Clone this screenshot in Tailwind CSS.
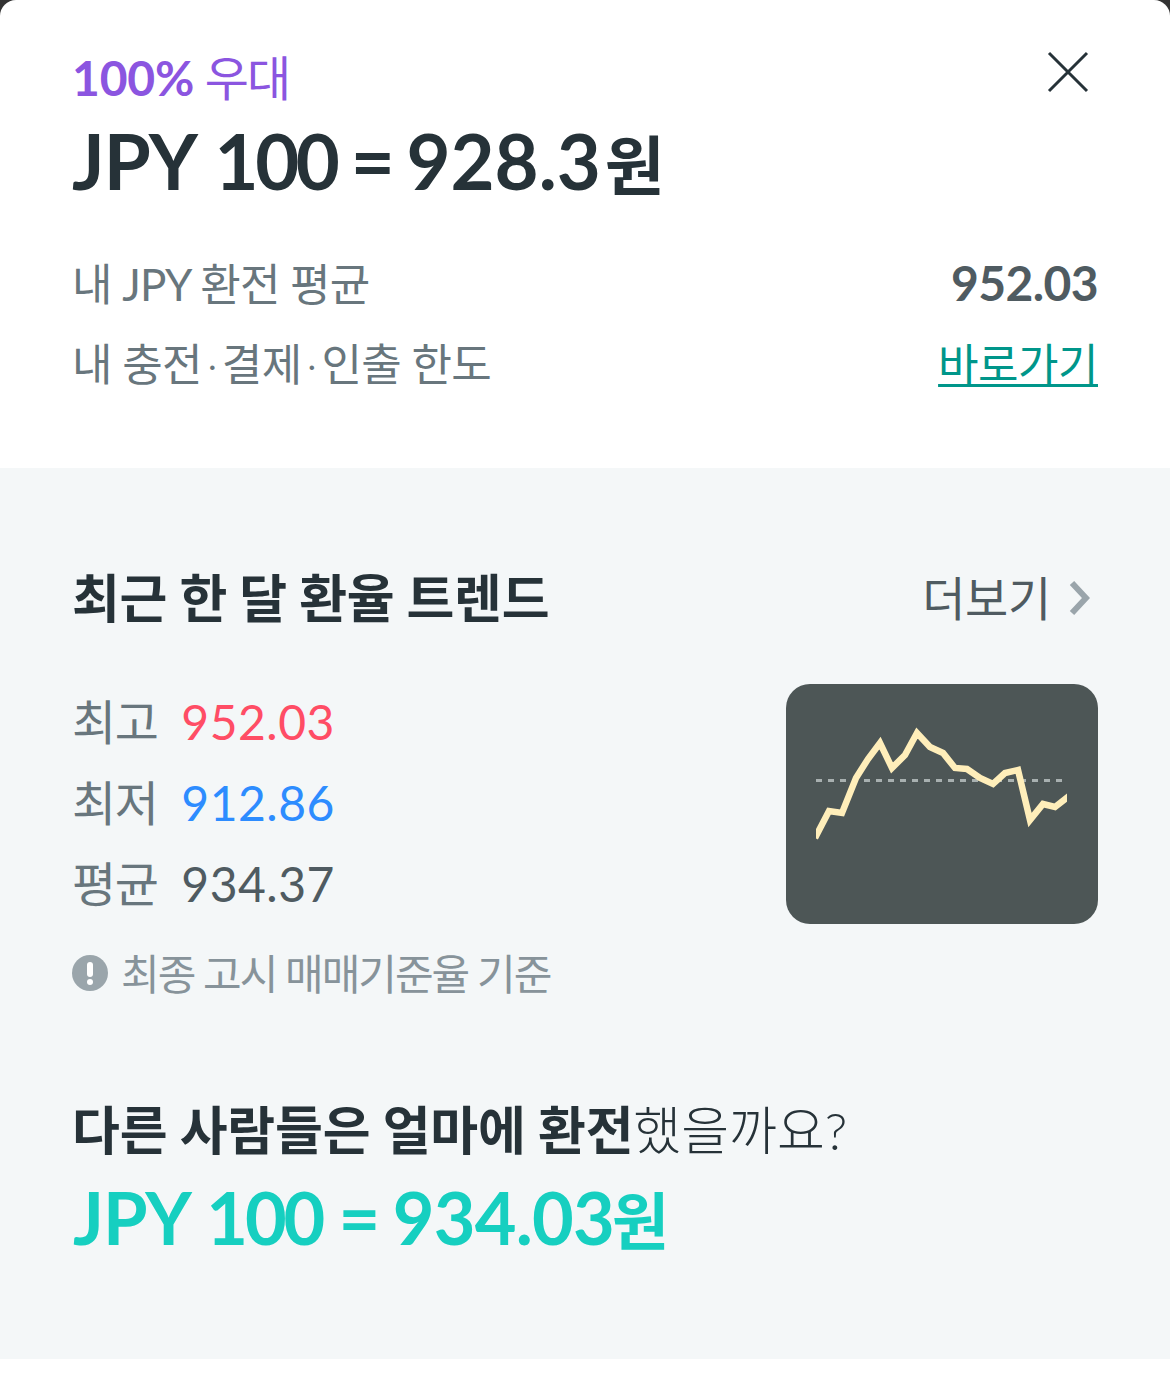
<!doctype html>
<html lang="ko"><head><meta charset="utf-8">
<script src="https://cdn.jsdelivr.net/npm/@tailwindcss/browser@4"></script>
</head>
<body class="m-0 w-[1170px] h-[1377px] bg-white overflow-hidden font-['Lato','Noto_Sans_CJK_KR',sans-serif]">
<div class="bg-[#333]">
<div class="h-[468px] px-[72px] pt-[44px] relative rounded-t-[16px] bg-white">
  <div class="text-[48px] leading-[68px] tracking-[-1.5px] text-[#8b55e0] h-[68px]"><span class="font-bold tracking-[-0.2px]">100%</span> <span class="font-normal text-[48px] tracking-[-2px]">우대</span></div>
  <div class="text-[76px] leading-[98px] font-bold text-[#263238] h-[100px]"><span class="tracking-[-0.8px]">JPY</span> <span class="tracking-[-3.5px] -ml-[1px]">100</span> <span class="-ml-[4px]">=</span> <span class="tracking-[0px] -ml-[7px]">928.3</span><span class="text-[65px] ml-[4px]">원</span></div>
  <div class="mt-[32px] flex justify-between items-center h-[80px] text-[44px] text-[#68767d] font-normal tracking-[-0.8px]"><span>내 JPY 환전 평균</span><span class="font-bold text-[#4f5b61] text-[48px] tracking-[-0.6px] -mt-[2px]">952.03</span></div>
  <div class="flex justify-between items-center h-[80px] text-[44px] text-[#68767d] font-normal tracking-[-0.7px]"><span>내 충전<span class="mx-[5px] font-light">·</span>결제<span class="mx-[5px] font-light">·</span>인출 한도</span><span class="text-[#00968a] tracking-[-0.5px] underline decoration-[3px] underline-offset-[3px]">바로가기</span></div>
  <svg class="absolute left-[1046px] top-[50px]" width="44" height="44" viewBox="0 0 44 44" fill="none" stroke="#263238" stroke-width="3"><path d="M3 3 L41 41 M41 3 L3 41"/></svg>
</div>
</div>
<div class="h-[891px] bg-[#f4f7f8] px-[72px] pt-[92px]">
  <div class="flex justify-between items-center h-[76px]">
    <span class="text-[52px] font-bold tracking-[-0.3px] text-[#263238]">최근 한 달 환율 트렌드</span>
    <span class="flex items-center gap-[17px] text-[47px] font-normal tracking-[-0.3px] text-[#4f5b61] pr-[8px]">더보기<svg width="22" height="36" viewBox="0 0 22 36" fill="none" stroke="#9aa5ab" stroke-width="6"><path d="M4 3 L18 18 L4 33"/></svg></span>
  </div>
  <div class="flex justify-between mt-[48px]">
    <div class="-mt-[3px] text-[48px] font-normal text-[#4f5b61]">
      <div class="flex gap-[24px] h-[81px] items-center"><span class="text-[#68767d] tracking-[-1.5px]">최고</span><span class="text-[#ff4d65] tracking-[0.5px]">952.03</span></div>
      <div class="flex gap-[24px] h-[81px] items-center"><span class="text-[#68767d] tracking-[-1.5px]">최저</span><span class="text-[#2d8cff] tracking-[0.5px]">912.86</span></div>
      <div class="flex gap-[24px] h-[81px] items-center"><span class="text-[#68767d] tracking-[-1.5px]">평균</span><span class="tracking-[0.5px]">934.37</span></div>
    </div>
    <div class="w-[312px] h-[240px] rounded-[24px] bg-[#4d5656]">
      <svg width="312" height="240" viewBox="0 0 312 240" fill="none">
        <defs><clipPath id="c"><rect x="30" y="0" width="251" height="240"/></clipPath></defs>
        <path d="M30 96.5 H280" stroke="#a8b0b0" stroke-width="3" stroke-dasharray="6 6"/>
        <path clip-path="url(#c)" d="M29 154 L43 127 L56 129 L70 94 L82 75 L94 59 L106 84 L119 71 L131 49 L144 63 L157 69 L169 84 L181 85 L194 94 L207 100 L219 89 L232 86 L244 136 L257 120 L269 123 L283 112" stroke="#ffeeba" stroke-width="6.5"/>
      </svg>
    </div>
  </div>
  <div class="flex items-center gap-[13px] mt-[21px] h-[56px] text-[42px] font-normal text-[#87939a] tracking-[-2px]">
    <svg width="36" height="36" viewBox="0 0 36 36"><circle cx="18" cy="18" r="18" fill="#9aa5ab"/><rect x="15" y="7" width="6" height="15" rx="3" fill="#fff"/><circle cx="18" cy="27" r="3" fill="#fff"/></svg>
    <span class="pt-[2px]">최종 고시 매매기준율 기준</span>
  </div>
  <div class="mt-[91px] text-[52px] leading-[76px] tracking-[0px] text-[#263238]"><span class="font-bold tracking-[-0.2px]">다른 사람들은 얼마에 환전</span><span class="font-light">했을까요?</span></div>
  <div class="text-[72px] leading-[99px] font-bold text-[#16cfc0] pl-[1px]"><span class="tracking-[-1px]">JPY</span> <span class="tracking-[-3.2px] -ml-[2px]">100</span> <span class="-ml-[1px]">=</span> <span class="tracking-[-0.8px] -ml-[5px]">934.03</span><span class="text-[62px] -ml-[2px]">원</span></div>
</div>
</body></html>
